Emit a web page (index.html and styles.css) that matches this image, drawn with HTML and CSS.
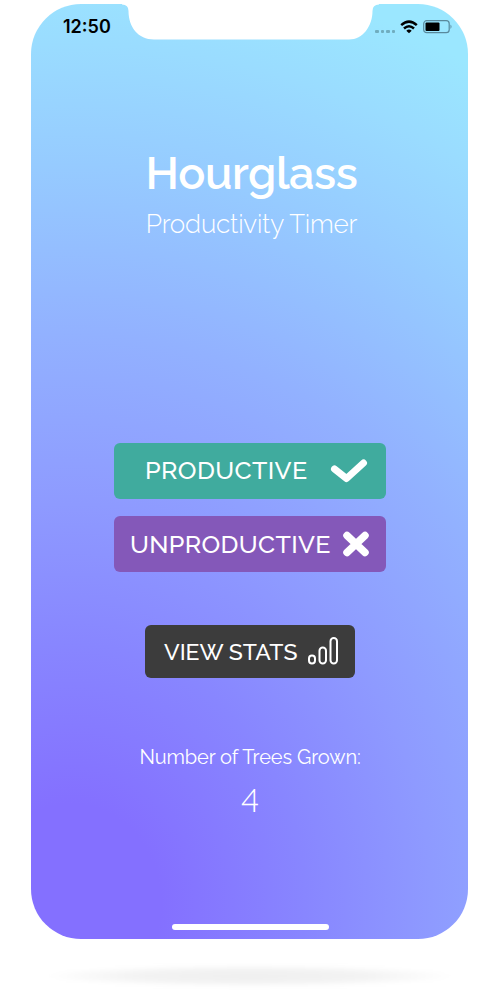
FILE: index.html
```html
<!DOCTYPE html>
<html lang="en">
<head>
<meta charset="utf-8">
<title>Hourglass</title>
<link rel="stylesheet" href="styles.css">
</head>
<body>
<main class="phone">
  <svg class="notch" width="258" height="37" viewBox="0 0 258 37"><path d="M0 0V.5Q6.500.5 6.500 7C6.500 23 16 35.500 32 35.500H227C241 35.500 250.500 22 250.500 7Q250.500.5 257 .5V0Z" fill="#fff"/></svg>
  <header class="status">
    <span class="time">12:50</span>
    <div class="indicators">
      <span class="dots"><i></i><i></i><i></i><i></i></span>
      <svg class="wifi" width="18" height="14" viewBox="0 0 18 14" fill="none" stroke="#000" stroke-width="2.500"><path d="M1.200 5.200Q9-1.900 16.800 5.200M4 8.500Q9 4 14 8.500"/><path d="M6.300 10.700Q9 8.300 11.700 10.700L9 13.300Z" fill="#000" stroke="none"/></svg>
      <svg width="30" height="14" viewBox="0 0 30 14"><rect x=".7" y=".7" width="25.500" height="12" rx="3" fill="none" stroke="#59899c" stroke-width="1.200"/><rect x="2.500" y="2.500" width="14" height="8.500" rx="1" fill="#000"/><path d="M27.500 4.500Q29.500 6.700 27.500 9Z" fill="#59899c"/></svg>
    </div>
  </header>
  <section class="heading">
    <h1 class="title">Hourglass</h1>
    <p class="subtitle">Productivity Timer</p>
  </section>
  <nav class="actions">
    <button class="button productive"><span>PRODUCTIVE</span><svg width="38" height="26" viewBox="0 0 38 26"><path d="M4.500 12L16.500 21.500L33.500 6" fill="none" stroke="#fff" stroke-width="7" stroke-linecap="round" stroke-linejoin="round"/></svg></button>
    <button class="button unproductive"><span>UNPRODUCTIVE</span><svg width="28" height="28" viewBox="0 0 28 28"><path d="M5 5.500L23 22.500M23 5.500L5 22.500" stroke="#fff" stroke-width="7.500" stroke-linecap="round"/></svg></button>
    <button class="button stats"><span>VIEW STATS</span><svg width="32" height="30" viewBox="0 0 32 30" fill="none" stroke="#fff" stroke-width="2"><rect x="2" y="18.500" width="6" height="8" rx="3"/><rect x="12.500" y="10.500" width="6.500" height="16" rx="3.200"/><rect x="23.500" y="1" width="6.500" height="25.500" rx="3.200"/></svg></button>
  </nav>
  <section class="trees">
    <p class="trees-label">Number of Trees Grown:</p>
    <p class="trees-count">4</p>
  </section>
  <div class="home"></div>
</main>
<div class="shadow"></div>
</body>
</html>
```
FILE: styles.css
```css
* { box-sizing: border-box; }
body { margin: 0; height: 1004px; padding: 4px 32px 0 31px; background: #fff; overflow: hidden; font-family: Raleway, Lato, sans-serif; }
h1, p { margin: 0; white-space: nowrap; }
.phone { position: relative; display: flex; flex-direction: column; align-items: center; width: 437px; height: 935px; padding-left: 1px; border-radius: 50px; overflow: hidden; color: #fff; background: radial-gradient(900px 1000px at 40px 900px, #8470ff 10%, #8886ff 26%, #8e9aff 40%, #92b1ff 57%, #96cbff 74%, #9adcff 86%, #9be7ff 95%); }
.notch { position: absolute; left: 91px; top: 0; }
.status { width: 100%; height: 46px; padding: 0 15px 0 31px; display: flex; justify-content: space-between; align-items: center; color: #000; }
.time { font: 600 18px/22px Inter, sans-serif; }
.indicators { display: flex; align-items: center; gap: 5px; }
.dots { display: flex; gap: 2px; padding-top: 8px; }
.dots i { width: 3.500px; height: 3px; border-radius: 1px; background: #70adbf; }
.heading { margin-top: 96px; padding-left: 3px; text-align: center; }
.title { font-size: 45px; line-height: 56px; font-weight: 600; letter-spacing: -.4px; }
.subtitle { font-size: 26px; line-height: 36px; font-weight: 300; letter-spacing: -.17px; margin-top: 4px; }
.actions { display: flex; flex-direction: column; align-items: center; margin-top: 201px; }
.button { display: flex; align-items: center; justify-content: space-between; border: 0; margin: 0; border-radius: 6px; color: #fff; font: 500 25px/32px Raleway, Lato, sans-serif; white-space: nowrap; }
.productive { width: 272px; height: 56px; padding: 0 18px 2px 31px; background: #40ab9e; letter-spacing: .4px; }
.unproductive { width: 272px; height: 56px; padding: 0 16px; margin-top: 17px; background: #8458b9; letter-spacing: .35px; }
.stats { width: 210px; height: 53px; padding: 0 16px 0 19px; margin-top: 53px; background: #3c3c3c; font-size: 23px; }
.trees { margin-top: 64px; text-align: center; }
.trees-label { font-size: 20px; line-height: 30px; letter-spacing: -.1px; }
.trees-count { font-size: 32px; line-height: 40px; font-weight: 300; font-variant-numeric: lining-nums; margin-top: 9px; }
.home { width: 157px; height: 6px; border-radius: 3px; background: #fff; margin: auto 0 9px; }
.shadow { width: 410px; height: 22px; margin: 26px auto 0; background: radial-gradient(closest-side, #efefef, #f3f3f3 60%, #fff); filter: blur(2px); }
```
